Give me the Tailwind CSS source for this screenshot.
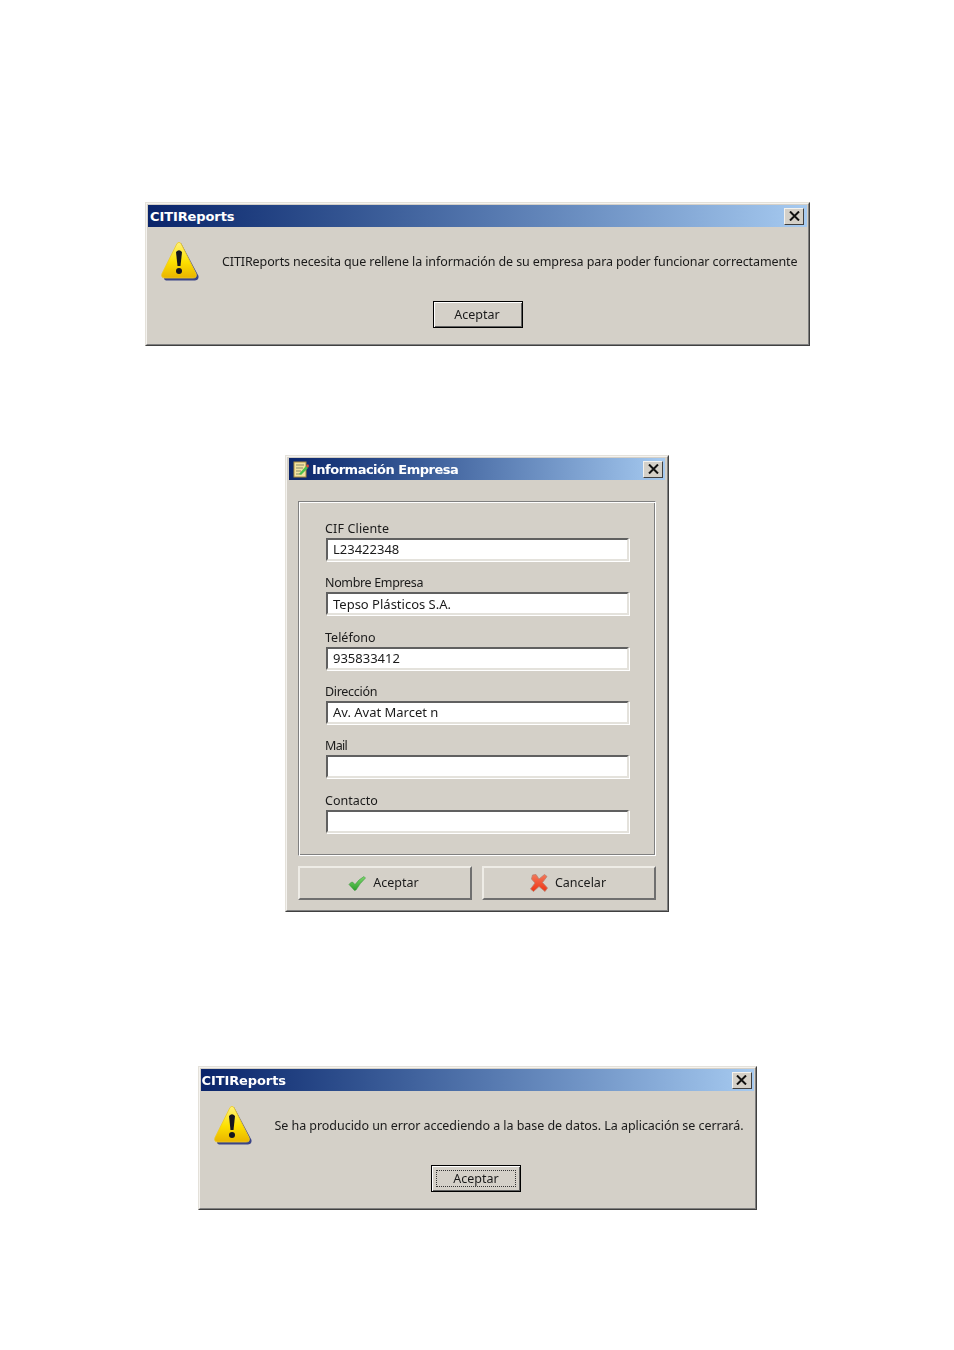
<!DOCTYPE html>
<html lang="es">
  <head>
    <meta charset="UTF-8" />
    <title>CITIReports</title>
    <script src="https://cdn.jsdelivr.net/npm/@tailwindcss/browser@4"></script>
  </head>
  <body class="bg-white h-[1350px] overflow-hidden font-['Noto_Sans','DejaVu_Sans',sans-serif] text-[12.5px] text-[#1a1a1a]">
    <svg width="0" height="0" class="absolute">
      <defs>
        <linearGradient id="warn" x1="0" y1="0" x2="0" y2="1">
          <stop offset="0" stop-color="#fff27a" />
          <stop offset="0.55" stop-color="#fde000" />
          <stop offset="1" stop-color="#e9b400" />
        </linearGradient>
        <linearGradient id="red" x1="0" y1="0" x2="0" y2="1">
          <stop offset="0" stop-color="#f4785a" />
          <stop offset="1" stop-color="#ee3312" />
        </linearGradient>
        <linearGradient id="green" x1="0" y1="0" x2="0" y2="1">
          <stop offset="0" stop-color="#7fd86e" />
          <stop offset="1" stop-color="#2a9f2a" />
        </linearGradient>
        <symbol id="warning" viewBox="0 0 38 40">
          <path d="M20 2 L37.500 35 Q38 39 34 39.500 L5 39.500 Q3 39 3 37 Z" fill="#3a4488" />
          <path d="M16 2.500 Q18 0 20 2.500 L35 32.500 Q36.500 37 32 37 L4 37 Q-0.500 37 1 32.500 Z" fill="url(#warn)" stroke="#ecc828" stroke-width="0.800" />
          <path d="M15 11 Q18 7.500 21 11 L19.500 25 L16.500 25 Z" fill="#15151f" />
          <circle cx="18" cy="30" r="3" fill="#15151f" />
        </symbol>
      </defs>
    </svg>

    <div class="flex flex-col items-center pt-[202px] blur-[0.35px]">
      <!-- primer aviso -->
      <div class="ml-px w-[665px] h-[144px] border border-[#e4e1da] border-r-[#404040] border-b-[#404040] bg-[#d4d0c8]">
        <div class="h-full border border-[#f4f2ee] border-r-[#808080] border-b-[#808080] p-px flex flex-col">
          <div class="h-[22px] shrink-0 flex items-center justify-between pl-[2px] pr-[3px] bg-gradient-to-r from-[#0a246a] to-[#a6caf0]">
            <span class="pt-px font-['DejaVu_Sans'] font-bold text-[13px] text-white tracking-[-0.1px]">CITIReports</span>
            <div class="w-5 h-[17px] flex items-center justify-center border border-[#f4f2ee] border-r-[#404040] border-b-[#404040] bg-[#d4d0c8]">
              <svg width="11" height="10" viewBox="0 0 11 10"><path d="M1 0.500 L10 9.500 M10 0.500 L1 9.500" stroke="#111" stroke-width="2" /></svg>
            </div>
          </div>
          <div class="h-[68px] shrink-0 flex items-center pl-[13px]">
            <svg class="shrink-0 w-[38px] h-[40px]" viewBox="0 0 38 40"><use href="#warning" /></svg>
            <span class="ml-[23px] mt-[3px] whitespace-nowrap tracking-[-0.1px]">CITIReports necesita que rellene la información de su empresa para poder funcionar correctamente</span>
          </div>
          <div class="flex justify-center mt-[6px]">
            <div class="w-[90px] h-[27px] pt-[2px] pr-px flex items-center justify-center border border-black bg-[#d4d0c8] shadow-[inset_1px_1px_0_#fff,inset_-1px_-1px_0_#606060]">Aceptar</div>
          </div>
        </div>
      </div>

      <!-- formulario -->
      <div class="mt-[109px] w-[384px] h-[457px] border border-[#e4e1da] border-r-[#404040] border-b-[#404040] bg-[#d4d0c8]">
        <div class="h-full border border-[#f4f2ee] border-r-[#808080] border-b-[#808080] p-px pl-[2px] pr-[2px] flex flex-col">
          <div class="h-[22px] shrink-0 flex items-center justify-between pl-[4px] pr-[2px] bg-gradient-to-r from-[#0a246a] to-[#a6caf0]">
            <div class="flex items-center gap-[3px]">
              <svg width="16" height="17" viewBox="0 0 16 17">
                <rect x="1" y="1" width="12" height="15" fill="#f2e2a0" stroke="#a98a3c" />
                <path d="M3 4h8M3 7h7M3 10h5M3 13h4" stroke="#8a8a6a" />
                <path d="M6 13 L13 5 L15 7 L8 14 Z" fill="#4cc04c" />
                <path d="M13 5 L15 3 L16 5 L15 7 Z" fill="#e0503a" />
              </svg>
              <span class="pt-px font-['DejaVu_Sans'] font-bold text-[13px] text-white tracking-[-0.5px]">Información Empresa</span>
            </div>
            <div class="w-5 h-[17px] flex items-center justify-center border border-[#f4f2ee] border-r-[#404040] border-b-[#404040] bg-[#d4d0c8]">
              <svg width="11" height="10" viewBox="0 0 11 10"><path d="M1 0.500 L10 9.500 M10 0.500 L1 9.500" stroke="#111" stroke-width="2" /></svg>
            </div>
          </div>

          <div class="mt-[21px] mx-[9px] h-[355px] border border-[#808080] border-r-white border-b-white shadow-[inset_1px_1px_0_#fff,inset_-1px_-1px_0_#808080] pl-[26px] pr-[26px] pt-[18px] flex flex-col gap-[13.33px]">
            <div class="h-[41px] flex flex-col">
              <label class="h-[18px] leading-[17px] tracking-[0.15px]">CIF Cliente</label>
              <div class="ml-px h-[23px] w-[303px] pl-[5px] pt-px flex items-center text-[13px] bg-white border-2 border-[#606060] border-r-[#e4e2dc] border-b-[#e4e2dc] shadow-[1px_1px_0_#fff] whitespace-nowrap">L23422348</div>
            </div>
            <div class="h-[41px] flex flex-col">
              <label class="h-[18px] leading-[17px] tracking-[-0.35px]">Nombre Empresa</label>
              <div class="ml-px h-[23px] w-[303px] pl-[5px] pt-px flex items-center text-[13px] bg-white border-2 border-[#606060] border-r-[#e4e2dc] border-b-[#e4e2dc] shadow-[1px_1px_0_#fff] whitespace-nowrap">Tepso Plásticos S.A.</div>
            </div>
            <div class="h-[41px] flex flex-col">
              <label class="h-[18px] leading-[17px]">Teléfono</label>
              <div class="ml-px h-[23px] w-[303px] pl-[5px] pt-px flex items-center text-[13px] bg-white border-2 border-[#606060] border-r-[#e4e2dc] border-b-[#e4e2dc] shadow-[1px_1px_0_#fff] whitespace-nowrap">935833412</div>
            </div>
            <div class="h-[41px] flex flex-col">
              <label class="h-[18px] leading-[17px] tracking-[-0.3px]">Dirección</label>
              <div class="ml-px h-[23px] w-[303px] pl-[5px] pt-px flex items-center text-[13px] bg-white border-2 border-[#606060] border-r-[#e4e2dc] border-b-[#e4e2dc] shadow-[1px_1px_0_#fff] whitespace-nowrap">Av. Avat Marcet n</div>
            </div>
            <div class="h-[41px] flex flex-col">
              <label class="h-[18px] leading-[17px] tracking-[-0.7px]">Mail</label>
              <div class="ml-px h-[23px] w-[303px] bg-white border-2 border-[#606060] border-r-[#e4e2dc] border-b-[#e4e2dc] shadow-[1px_1px_0_#fff]"></div>
            </div>
            <div class="h-[41px] flex flex-col">
              <label class="h-[18px] leading-[17px]">Contacto</label>
              <div class="ml-px h-[23px] w-[303px] bg-white border-2 border-[#606060] border-r-[#e4e2dc] border-b-[#e4e2dc] shadow-[1px_1px_0_#fff]"></div>
            </div>
          </div>

          <div class="mt-[10px] mx-[9px] flex gap-[10px]">
            <div class="w-[174px] h-[34px] pr-[3px] flex items-center justify-center gap-[7px] border-2 border-[#eeece6] border-r-[#6f6f6f] border-b-[#6f6f6f]">
              <svg width="18" height="15" viewBox="0 0 18 15"><path d="M1 8.500 Q2.500 6 4.500 6 L7 8.500 Q11 3 16 0.500 L17.500 2 Q12 7 8 14 L6.500 14.500 Z" fill="url(#green)" stroke="#2f8f35" stroke-width="0.500" /></svg>
              <span>Aceptar</span>
            </div>
            <div class="w-[174px] h-[34px] pr-[2px] flex items-center justify-center gap-[7px] border-2 border-[#eeece6] border-r-[#6f6f6f] border-b-[#6f6f6f]">
              <svg width="18" height="18" viewBox="0 0 18 18"><path d="M2.500 1 L6 0.500 L9 5 L14.500 0.500 L17 2.500 L12.500 8.500 L17.500 14 L15 17.500 L9 12.500 L3.500 17.500 L0.500 15 L5 9 L1.500 5 Z" fill="url(#red)" stroke="#b9806f" stroke-width="0.800" /></svg>
              <span>Cancelar</span>
            </div>
          </div>
        </div>
      </div>

      <!-- segundo aviso -->
      <div class="mt-[154px] w-[559px] h-[144px] border border-[#e4e1da] border-r-[#404040] border-b-[#404040] bg-[#d4d0c8]">
        <div class="h-full border border-[#f4f2ee] border-r-[#808080] border-b-[#808080] p-px flex flex-col">
          <div class="h-[22px] shrink-0 flex items-center justify-between pl-[1px] pr-[2px] bg-gradient-to-r from-[#0a246a] to-[#a6caf0]">
            <span class="pt-px font-['DejaVu_Sans'] font-bold text-[13px] text-white tracking-[-0.1px]">CITIReports</span>
            <div class="w-5 h-[17px] flex items-center justify-center border border-[#f4f2ee] border-r-[#404040] border-b-[#404040] bg-[#d4d0c8]">
              <svg width="11" height="10" viewBox="0 0 11 10"><path d="M1 0.500 L10 9.500 M10 0.500 L1 9.500" stroke="#111" stroke-width="2" /></svg>
            </div>
          </div>
          <div class="h-[68px] shrink-0 flex items-center pl-[13px]">
            <svg class="shrink-0 w-[38px] h-[40px]" viewBox="0 0 38 40"><use href="#warning" /></svg>
            <span class="ml-[23px] mt-[3px] whitespace-nowrap tracking-[-0.05px]">Se ha producido un error accediendo a la base de datos. La aplicación se cerrará.</span>
          </div>
          <div class="flex justify-center mt-[6px]">
            <div class="-ml-[2px] w-[90px] h-[27px] p-[4px] border border-black bg-[#d4d0c8] shadow-[inset_1px_1px_0_#fff,inset_-1px_-1px_0_#606060]">
              <div class="h-full pt-[2px] flex items-center justify-center border border-dotted border-[#333]">Aceptar</div>
            </div>
          </div>
        </div>
      </div>
    </div>
  </body>
</html>
